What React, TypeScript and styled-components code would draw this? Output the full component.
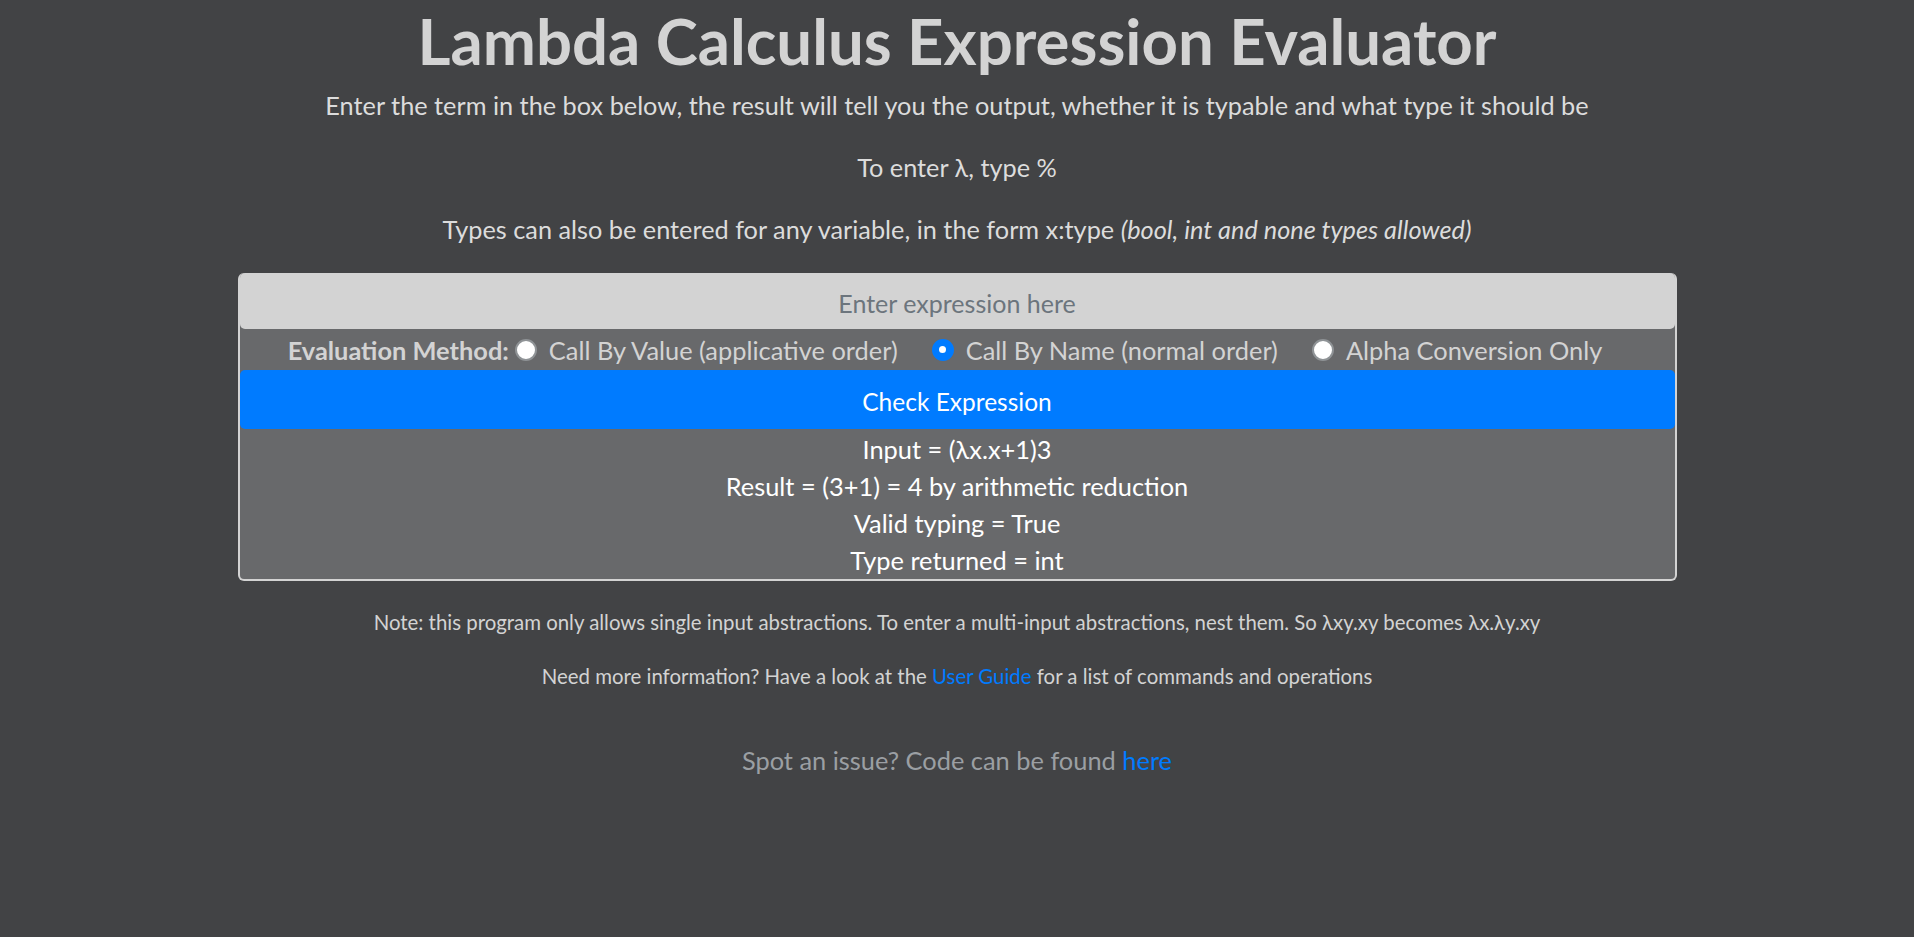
import React from 'react';
import styled, { createGlobalStyle } from 'styled-components';

const GlobalStyle = createGlobalStyle`
  html, body {
    margin: 0;
    padding: 0;
    background-color: #424345;
  }
  body {
    font-family: Lato, "Open Sans", sans-serif;
    color: #d3d3d3;
  }
`;

const Page = styled.main`
  text-align: center;
  min-height: 937px;
  padding-top: 3px;
`;

const Title = styled.h1`
  font-size: 63.5px;
  font-weight: 700;
  line-height: 76px;
  margin: 0 0 8px;
  color: #d3d3d3;
`;

const Lead = styled.p`
  font-size: 25.3px;
  line-height: 36px;
  margin: 0 0 26px;
  color: #dcdcdc;
`;

const Panel = styled.section`
  width: 1435px;
  margin: 18px auto 0;
  border: 2px solid #d3d3d3;
  border-top: none;
  border-radius: 6px;
  background-color: #68696b;
  display: flex;
  flex-direction: column;
`;

const ExprInput = styled.input`
  display: block;
  box-sizing: border-box;
  width: 100%;
  height: 56px;
  padding: 4px 0 0;
  border: none;
  border-radius: 5px;
  background-color: #d3d3d3;
  text-align: center;
  font-family: inherit;
  font-size: 25px;
  color: #495057;
  outline: none;

  &::placeholder {
    color: #6c757d;
  }
`;

const MethodRow = styled.div`
  height: 41px;
  display: flex;
  align-items: center;
  justify-content: center;
  font-size: 25.4px;
  padding-right: 24px;
`;

const MethodLabel = styled.span`
  font-weight: 700;
  color: #d3d3d3;
  margin-right: 6px;
`;

const Option = styled.label`
  display: flex;
  align-items: center;
  gap: 12px;
  margin-right: 34px;
  color: #d3d3d3;

  &:last-child {
    margin-right: 0;
  }
`;

const RadioDot = styled.span<{ $checked?: boolean }>`
  box-sizing: border-box;
  width: 22px;
  height: 22px;
  border-radius: 50%;
  background-color: ${(p) => (p.$checked ? '#007bff' : '#ffffff')};
  border: 2px solid ${(p) => (p.$checked ? '#007bff' : '#8f9396')};
  display: flex;
  align-items: center;
  justify-content: center;

  &::after {
    content: '';
    display: ${(p) => (p.$checked ? 'block' : 'none')};
    width: 7px;
    height: 7px;
    border-radius: 50%;
    background: #ffffff;
  }
`;

const CheckButton = styled.button`
  display: block;
  width: 100%;
  height: 59px;
  padding: 4px 0 0;
  border: none;
  border-radius: 5px;
  background-color: #007bff;
  color: #ffffff;
  font-family: inherit;
  font-size: 24.5px;
  cursor: pointer;
`;

const Results = styled.div`
  padding-top: 2px;
  font-size: 25.4px;
  line-height: 37px;
  color: #ffffff;
`;

const Note = styled.p`
  font-size: 20.4px;
  line-height: 28px;
  margin: 0;
  color: #d3d3d3;
`;

const Link = styled.a`
  color: #007bff;
  text-decoration: none;
`;

const Notes = styled.div`
  margin-top: 27px;
  display: flex;
  flex-direction: column;
  gap: 26px;
`;

const Footer = styled.p`
  margin: 52px 0 0;
  font-size: 25.4px;
  line-height: 36px;
  color: #9b9fa3;
`;

const methods = [
  { label: 'Call By Value (applicative order)', checked: false },
  { label: 'Call By Name (normal order)', checked: true },
  { label: 'Alpha Conversion Only', checked: false },
];

const results = [
  'Input = (λx.x+1)3',
  'Result = (3+1) = 4 by arithmetic reduction',
  'Valid typing = True',
  'Type returned = int',
];

export default function App() {
  return (
    <>
      <GlobalStyle />
      <Page>
        <Title>Lambda Calculus Expression Evaluator</Title>
        <Lead>
          Enter the term in the box below, the result will tell you the output, whether it is typable and what type it should be
        </Lead>
        <Lead>To enter λ, type %</Lead>
        <Lead>
          Types can also be entered for any variable, in the form x:type <i>(bool, int and none types allowed)</i>
        </Lead>
        <Panel>
          <ExprInput placeholder="Enter expression here" />
          <MethodRow>
            <MethodLabel>Evaluation Method:</MethodLabel>
            {methods.map((m) => (
              <Option key={m.label}>
                <RadioDot $checked={m.checked} />
                {m.label}
              </Option>
            ))}
          </MethodRow>
          <CheckButton>Check Expression</CheckButton>
          <Results>
            {results.map((r) => (
              <div key={r}>{r}</div>
            ))}
          </Results>
        </Panel>
        <Notes>
          <Note>
            Note: this program only allows single input abstractions. To enter a multi-input abstractions, nest them. So λxy.xy becomes λx.λy.xy
          </Note>
          <Note>
            Need more information? Have a look at the <Link href="#">User Guide</Link> for a list of commands and operations
          </Note>
        </Notes>
        <Footer>
          Spot an issue? Code can be found <Link href="#">here</Link>
        </Footer>
      </Page>
    </>
  );
}
